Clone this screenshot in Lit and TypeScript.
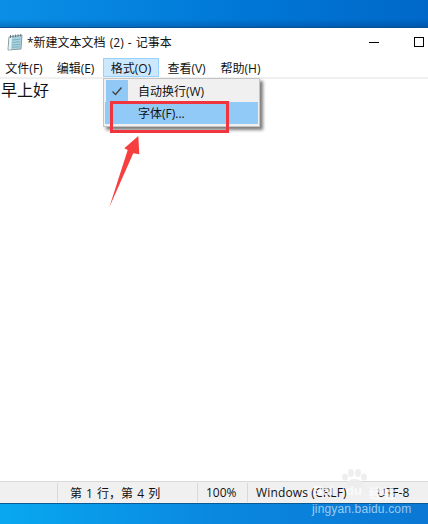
import { LitElement, html, css } from "lit";
import { customElement } from "lit/decorators.js";

@customElement("app-root")
export class AppRoot extends LitElement {
  static styles = css`
    :host { display: block; width: 428px; height: 524px; position: relative; overflow: hidden;
      font-family: "Open Sans", "Noto Sans CJK SC", sans-serif; color: #111; }
    .page { display: flex; flex-direction: column; height: 524px; }
    .desk-top { height: 28px; box-sizing: border-box; flex: none; background: linear-gradient(180deg, rgba(255,255,255,0) 70%, rgba(0,30,90,.25) 100%), linear-gradient(90deg, #0a8fe6 0%, #0078d7 55%, #0068c8 100%); border-bottom: 1px solid #0a4f8f; }
    .title { height: 28px; background: #fff; display: flex; align-items: center; flex: none; }
    .title svg.ico { margin-left: 7px; flex: none; }
    .title .t { font-size: 12px; margin-left: 4px; white-space: nowrap; word-spacing: 1px; }
    .title .sp { flex: 1; }
    .min { width: 10px; height: 1px; background: #000; margin-right: 35px; }
    .max { width: 8px; height: 8px; border: 1px solid #000; margin-right: 4px; }
    .menubar { background: #fff; display: flex; font-size: 12px; flex: none; border-bottom: 2px solid #f0f0f0; height: 19px; padding-top: 2px; }
    .mi { display: flex; align-items: center; justify-content: center; height: 19px; box-sizing: border-box; white-space: nowrap; }
    .mi.on { background: #cce8ff; border: 1px solid #99d1ff; }
    .body { flex: 1; background: #fff; font-size: 16px; padding-left: 1px; line-height: 20px; padding-top: 1px; }
    .status { height: 22px; box-sizing: border-box; background: #f0f0f0; border-top: 1px solid #d9d9d9; display: flex; align-items: center; font-size: 12px; flex: none; }
    .cell { height: 19px; display: flex; align-items: center; border-left: 1px solid #d9d9d9; box-sizing: border-box; white-space: pre; }
    .f { border-left: none; width: 57px; }
    .pos { width: 140px; padding-left: 12px; word-spacing: 1px; }
    .zoom { width: 50px; padding-left: 8px; }
    .crlf { width: 130px; padding-left: 8px; letter-spacing: .15px; }
    .enc { border-left: none; }
    .desk-bot { height: 21px; background: linear-gradient(90deg, #08a8f0 0%, #0a88e0 50%, #0a78d4 100%); border-top: 1px solid #0b5a94; box-sizing: border-box; flex: none; }
    .menu { position: absolute; left: 103px; top: 78px; width: 155px; height: 47px; background: #f0f0f0; border: 1px solid #c4c4c4; box-shadow: 3px 3px 3px rgba(0,0,0,.5); font-size: 12px; }
    .row { position: absolute; left: 1px; right: 1px; height: 22px; display: flex; align-items: center; padding-left: 33px; white-space: nowrap; }
    .r1 { top: 1px; }
    .r2 { top: 23px; background: #91c9f7; }
    .check { position: absolute; left: 2px; top: 1px; width: 22px; height: 22px; background: #90c8f6; display: flex; align-items: center; justify-content: center; }
    .redbox { position: absolute; left: 110px; top: 101px; width: 113px; height: 26px; border: 3px solid #f0353f; }
    .arrow { position: absolute; left: 105px; top: 134px; }
    .wm { position: absolute; left: 312px; top: 502px; font-size: 12px; color: rgba(255,255,255,.6); white-space: nowrap; letter-spacing: .15px; font-family: "Liberation Sans", sans-serif; }
    .bai { position: absolute; top: 483px; font-size: 13px; color: rgba(255,255,255,.75); font-weight: 700; white-space: nowrap; font-family: "Liberation Sans", "Noto Sans CJK SC", sans-serif; }
    .paw { position: absolute; left: 341px; top: 469px; }
  `;

  render() {
    return html`
      <div class="page">
        <div class="desk-top"></div>
        <div class="title">
          <svg class="ico" width="16" height="17" viewBox="0 0 16 17">
            <path d="M2 3 L15 1 L14 15 L1 16 Z" fill="#a9d3de" stroke="#8b9ba2" stroke-width="1"/>
            <path d="M2.5 3.5 L5 3 L4 15.5 L1.5 15.5 Z" fill="#e8f3f6"/>
            <path d="M5 6 L13.5 5.2 M5 8.5 L13.3 7.8 M5 11 L13 10.4 M5 13.3 L12.8 12.8" stroke="#7fb0c0" stroke-width="1"/>
            <path d="M3.5 1 V4 M6 .8 V3.6 M8.5 .6 V3.2 M11 .4 V2.8 M13.5 .2 V2.4" stroke="#66767c" stroke-width="1"/>
          </svg>
          <span class="t">*新建文本文档 (2) - 记事本</span>
          <span class="sp"></span>
          <span class="min"></span>
          <span class="max"></span>
        </div>
        <div class="menubar">
          <div class="mi" style="width:48px">文件(F)</div>
          <div class="mi" style="width:55px">编辑(E)</div>
          <div class="mi on" style="width:56px">格式(O)</div>
          <div class="mi" style="width:55px">查看(V)</div>
          <div class="mi" style="width:53px">帮助(H)</div>
        </div>
        <div class="body">早上好</div>
        <div class="status">
          <div class="cell f"></div>
          <div class="cell pos">第 1 行，第 4 列</div>
          <div class="cell zoom">100%</div>
          <div class="cell crlf">Windows (CRLF)</div>
          <div class="cell enc">UTF-8</div>
        </div>
        <div class="desk-bot"></div>
      </div>
      <div class="menu">
        <div class="check">
          <svg width="12" height="10" viewBox="0 0 12 10"><path d="M1.5 5.5 L4.5 8.5 L10.5 1.5" fill="none" stroke="#444" stroke-width="1.4"/></svg>
        </div>
        <div class="row r1">自动换行(W)</div>
        <div class="row r2">字体(F)...</div>
      </div>
      <div class="redbox"></div>
      <svg class="arrow" width="36" height="76" viewBox="0 0 36 76">
        <path d="M4.3 73.3 L22.7 16 L19.3 14.3 L33.3 2 L34.3 20.3 L28.3 19.3 Z" fill="#f5403f"/>
      </svg>
      <svg class="paw" width="27" height="20" viewBox="0 0 27 20">
        <g fill="#ececec" fill-opacity=".9">
          <ellipse cx="4" cy="8" rx="3" ry="3.5"/><ellipse cx="10" cy="4" rx="3" ry="4"/>
          <ellipse cx="17" cy="4" rx="3" ry="4"/><ellipse cx="23" cy="8" rx="3" ry="3.5"/>
          <ellipse cx="13.5" cy="15" rx="8" ry="5"/>
        </g>
      </svg>
      <div class="bai" style="left:313px">Bai</div>
      <div class="bai" style="left:346px">du</div>
      <div class="bai" style="left:369px">经验</div>
      <div class="wm">jingyan.baidu.com</div>
    `;
  }
}
